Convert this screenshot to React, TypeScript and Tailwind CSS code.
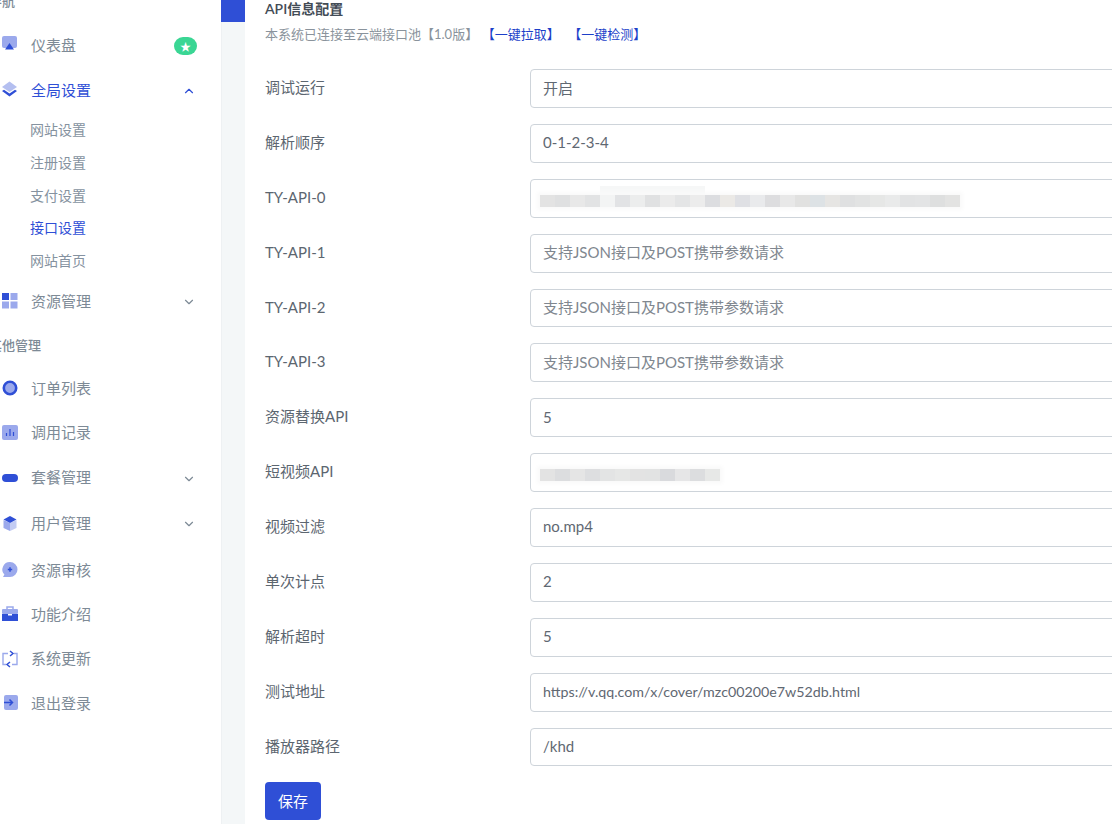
import { ChevronDown, ChevronUp } from "lucide-react";
import type { ReactNode } from "react";

const DARK = "#2f4fd6";
const LIGHT = "#9ba9ec";

const icons: Record<string, ReactNode> = {
  dashboard: (
    <>
      <rect x="1" y="0" width="15" height="12" rx="2" fill={LIGHT} />
      <path d="M8.5 7 L13 13.5 H4 Z" fill={DARK} />
    </>
  ),
  layers: (
    <>
      <path d="M8.5 0.5 L16 6 L8.5 11 L1 6 Z" fill="#b4bff0" />
      <path d="M1 10 L3 8.8 L8.5 12.4 L14 8.8 L16 10 L8.5 15.5 Z" fill={DARK} />
    </>
  ),
  grid: (
    <>
      <rect x="1" y="1" width="7" height="7" fill={DARK} />
      <rect x="9.5" y="1" width="7" height="7" fill={LIGHT} />
      <rect x="1" y="9.5" width="7" height="7" fill={LIGHT} />
      <rect x="9.5" y="9.5" width="7" height="7" fill={LIGHT} />
    </>
  ),
  circle: <circle cx="9" cy="9" r="6.2" fill={LIGHT} stroke={DARK} strokeWidth="2.6" />,
  chart: (
    <>
      <rect x="1" y="1" width="16" height="15" rx="2" fill={LIGHT} />
      <path d="M5.5 12 V9 M9 12 V5 M12.5 12 V8" stroke={DARK} strokeWidth="1.2" />
    </>
  ),
  pill: <rect x="1" y="5" width="16" height="8" rx="4" fill={DARK} />,
  cube: (
    <>
      <path d="M2.5 6 L9 9 V17 L2.5 14 Z" fill={LIGHT} />
      <path d="M15.5 6 L9 9 V17 L15.5 14 Z" fill="#c3ccf3" />
      <path d="M9 2 L15.5 5.5 L9 9 L2.5 5.5 Z" fill={DARK} />
    </>
  ),
  chat: (
    <>
      <path d="M9 1 A7.5 7.5 0 1 1 9 16 H2 L3.4 13.6 A7.5 7.5 0 0 1 9 1 Z" fill={LIGHT} />
      <path d="M9 6.2 V10.8 M6.8 8.5 H11.2" stroke={DARK} strokeWidth="1.5" />
    </>
  ),
  case: (
    <>
      <path d="M6 4 V2 H12 V4" fill="none" stroke={LIGHT} strokeWidth="1.5" />
      <rect x="1" y="4" width="16" height="5" rx="1" fill={LIGHT} />
      <path d="M1 9 H7 V10.5 H11 V9 H17 V16 H1 Z" fill={DARK} />
    </>
  ),
  sync: (
    <>
      <path d="M7 3.5 H2 V14.5 H5 M11 14.5 H16 V3.5 H13" fill="none" stroke={LIGHT} strokeWidth="1.4" />
      <path d="M9 1 L12 3.5 L9 6 M9 12 L6 14.5 L9 17" fill="none" stroke={DARK} strokeWidth="1.5" />
    </>
  ),
  logout: (
    <>
      <rect x="3" y="1" width="14" height="15" rx="2" fill={LIGHT} />
      <path d="M3 8.5 H11 M8.5 5.5 L11.5 8.5 L8.5 11.5" fill="none" stroke={DARK} strokeWidth="1.5" />
    </>
  ),
};

function NavIcon({ name }: { name: string }) {
  return (
    <svg viewBox="0 0 18 18" className="w-[18px] h-[18px] shrink-0">
      {icons[name]}
    </svg>
  );
}

function NavItem({
  icon,
  label,
  active,
  open,
  chevron,
  badge,
  className = "h-[44.8px]",
}: {
  icon: string;
  label: string;
  active?: boolean;
  open?: boolean;
  chevron?: boolean;
  badge?: boolean;
  className?: string;
}) {
  return (
    <div className={"flex items-center " + className}>
      <NavIcon name={icon} />
      <span className={"ml-3 text-[15px] " + (active ? "text-[#2f4fd6]" : "text-[#7d8a96]")}>{label}</span>
      {badge && (
        <span className="ml-auto mr-6 mt-[3px] w-[23px] h-[18px] rounded-full bg-[#3ad694] flex items-center justify-center text-white text-[11px] leading-none">
          ★
        </span>
      )}
      {chevron &&
        (open ? (
          <ChevronUp size={14} className="ml-auto mr-[25px] mt-[2px] text-[#2f4fd6]" />
        ) : (
          <ChevronDown size={14} className="ml-auto mr-[25px] mt-[2px] text-[#7d8a96]" />
        ))}
    </div>
  );
}

const subItems = [
  { label: "网站设置" },
  { label: "注册设置" },
  { label: "支付设置" },
  { label: "接口设置", active: true },
  { label: "网站首页" },
];

function Sidebar() {
  return (
    <aside className="w-[221px] shrink-0 bg-white overflow-hidden pl-px">
      <div className="-mt-[9px] -ml-[12px] h-5 leading-5 text-[13px] font-medium text-[#7d8a96]">导航</div>
      <div className="h-[11.6px]" />
      <NavItem icon="dashboard" label="仪表盘" badge />
      <NavItem icon="layers" label="全局设置" active chevron open />
      <div className="pt-[1px] pb-[1.4px] pl-[29px]">
        {subItems.map((s) => (
          <div
            key={s.label}
            className={"h-[32.8px] flex items-center text-[14px] " + (s.active ? "text-[#2f4fd6]" : "text-[#8592a0]")}
          >
            {s.label}
          </div>
        ))}
      </div>
      <NavItem icon="grid" label="资源管理" chevron />
      <div className="mt-[11.6px] mb-[10.6px] -ml-[12px] h-5 leading-5 text-[13px] font-medium text-[#7d8a96]">其他管理</div>
      <NavItem icon="circle" label="订单列表" />
      <NavItem icon="chart" label="调用记录" />
      <NavItem icon="pill" label="套餐管理" chevron />
      <NavItem icon="cube" label="用户管理" chevron className="h-[44.8px] mt-[0.6px]" />
      <NavItem icon="chat" label="资源审核" className="h-[44px] mt-[2.6px]" />
      <NavItem icon="case" label="功能介绍" className="h-[44.4px]" />
      <NavItem icon="sync" label="系统更新" className="h-[44.4px]" />
      <NavItem icon="logout" label="退出登录" />
    </aside>
  );
}

const blur1 = [
  "bg-[#e3e3e3]", "bg-[#dfe0e1]", "bg-[#e8e8e8]", "bg-[#e2e3e4]", "bg-[#f3f4f4]", "bg-[#e2e3e5]", "bg-[#eceded]",
  "bg-[#e0e1e2]", "bg-[#ebebeb]", "bg-[#e4e5e6]", "bg-[#ececec]", "bg-[#dcdde0]", "bg-[#ebe9e6]", "bg-[#dfe0e4]",
  "bg-[#e9eaec]", "bg-[#dddddf]", "bg-[#e8e8e8]", "bg-[#e1e1e0]", "bg-[#dde2e5]", "bg-[#e6e5e3]", "bg-[#dfe0e1]",
  "bg-[#e2e3e3]", "bg-[#e6e7e6]", "bg-[#e9eaea]", "bg-[#e2e3e4]", "bg-[#e3e4e5]", "bg-[#dedfdf]", "bg-[#e3e3e2]",
];

const blur2 = [
  "bg-[#e3e3e3]", "bg-[#dcdddf]", "bg-[#e5e5e5]", "bg-[#dddee0]", "bg-[#e3e4e4]", "bg-[#e6e7e6]", "bg-[#e3e3e3]",
  "bg-[#e2e3e3]", "bg-[#d9dadd]", "bg-[#e6e6e7]", "bg-[#dcdddf]", "bg-[#e7e8e7]",
];

function Blur({ blocks, halo }: { blocks: string[]; halo?: boolean }) {
  return (
    <>
      {halo && <div className="absolute left-[70px] top-[7px] w-[105px] h-[12px] bg-[#f6f7f7]" />}
      <div className="absolute left-[10px] top-[16px] flex h-[12px] shadow-[0_0_4px_3px_#fafafa]">
        {blocks.map((c, i) => (
          <span key={i} className={"w-[15px] " + c} />
        ))}
      </div>
    </>
  );
}

type Row = { label: string; value?: string; placeholder?: string; blur?: string[]; halo?: boolean; size?: string };

const rows: Row[] = [
  { label: "调试运行", value: "开启" },
  { label: "解析顺序", value: "0-1-2-3-4" },
  { label: "TY-API-0", blur: blur1, halo: true },
  { label: "TY-API-1", placeholder: "支持JSON接口及POST携带参数请求" },
  { label: "TY-API-2", placeholder: "支持JSON接口及POST携带参数请求" },
  { label: "TY-API-3", placeholder: "支持JSON接口及POST携带参数请求" },
  { label: "资源替换API", value: "5" },
  { label: "短视频API", blur: blur2 },
  { label: "视频过滤", value: "no.mp4" },
  { label: "单次计点", value: "2" },
  { label: "解析超时", value: "5" },
  { label: "测试地址", value: "https://v.qq.com/x/cover/mzc00200e7w52db.html", size: "text-[14.25px]" },
  { label: "播放器路径", value: "/khd" },
];

function FormRow({ row }: { row: Row }) {
  return (
    <div className="flex mb-4">
      <label className="w-[265px] shrink-0 text-[15px] leading-[36px] text-[#5c6670]">{row.label}</label>
      <div className="relative w-[640px] shrink-0">
        <input
          readOnly
          value={row.value ?? ""}
          placeholder={row.placeholder}
          className={
            "block w-full h-[38.88px] px-3 pb-[2px] border border-[#ced4da] rounded bg-white text-[#5f6872] placeholder:text-[#80878f] outline-none " +
            (row.size ?? "text-[15px]")
          }
        />
        {row.blur && <Blur blocks={row.blur} halo={row.halo} />}
      </div>
    </div>
  );
}

export default function App() {
  return (
    <div className="flex h-[824px] w-[1112px] overflow-hidden bg-white font-['Lato','Noto_Sans_CJK_SC',sans-serif]">
      <Sidebar />
      <div className="w-6 shrink-0 bg-[#f4f7f8] border-l border-[#eef1f3]">
        <div className="h-[22px] -ml-px bg-[#2f4fd6]" />
      </div>
      <main className="flex-1 min-w-0 pl-5">
        <h2 className="h-[20px] -mt-px text-[14px] leading-5 font-semibold text-[#434c56]">API信息配置</h2>
        <p className="mt-[5px] mb-[25px] h-5 text-[13px] leading-5 text-[#8a939c] whitespace-nowrap">
          本系统已连接至云端接口池【1.0版】
          <a className="ml-[10px] text-[#1c3fc9]">【一键拉取】</a>
          <a className="ml-[15px] text-[#1c3fc9]">【一键检测】</a>
        </p>
        {rows.map((r) => (
          <FormRow key={r.label} row={r} />
        ))}
        <button className="w-14 h-[38px] rounded bg-[#2f4fd6] text-white text-[15px]">保存</button>
      </main>
    </div>
  );
}
